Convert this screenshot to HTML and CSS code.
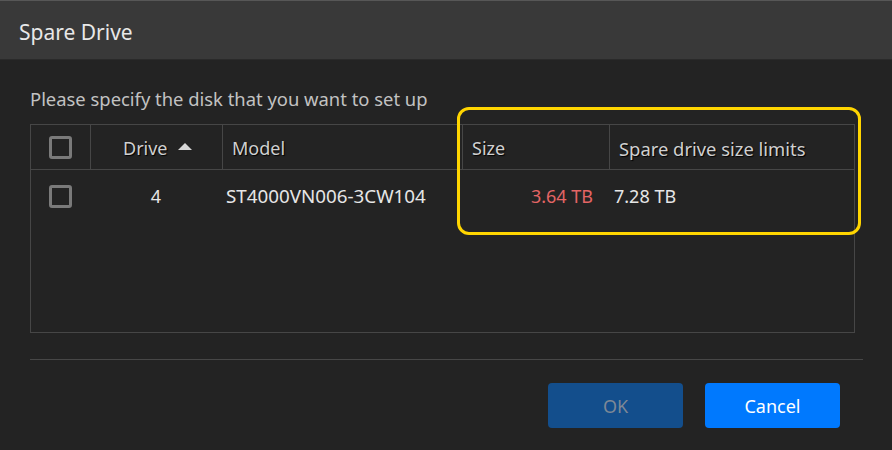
FILE: index.html
```html
<!DOCTYPE html>
<html>
<head>
<meta charset="utf-8">
<link rel="stylesheet" href="styles.css">
</head>
<body>
<div class="dialog">
  <div class="header"><span class="title">Spare Drive</span></div>
  <div class="content">
    <p class="prompt">Please specify the disk that you want to set up</p>
    <div class="table">
      <div class="row head">
        <div class="cell c-check"><span class="checkbox"></span></div>
        <div class="cell c-drive">Drive <span class="sort"></span></div>
        <div class="cell c-model">Model</div>
        <div class="cell c-size">Size</div>
        <div class="cell c-limit">Spare drive size limits</div>
      </div>
      <div class="row data">
        <div class="cell c-check"><span class="checkbox"></span></div>
        <div class="cell c-drive">4</div>
        <div class="cell c-model">ST4000VN006-3CW104</div>
        <div class="cell c-size"><span class="warn">3.64 TB</span></div>
        <div class="cell c-limit">7.28 TB</div>
      </div>
    </div>
    <div class="separator"></div>
    <div class="actions">
      <button class="btn btn-ok" disabled>OK</button>
      <button class="btn btn-cancel">Cancel</button>
    </div>
  </div>
  <div class="highlight"></div>
</div>
</body>
</html>
```
FILE: styles.css
```css
html, body {
  margin: 0;
  padding: 0;
  background: #232323;
}
body {
  font-family: "Noto Sans", "Open Sans", sans-serif;
}
.dialog {
  position: relative;
  width: 892px;
  height: 450px;
  background: #232323;
  overflow: hidden;
}
.header {
  height: 58px;
  background: #393939;
  border-top: 1px solid #575757;
  border-bottom: 1px solid #2a2a2a;
  display: flex;
  align-items: center;
  padding-left: 19px;
  box-sizing: content-box;
}
.title {
  color: #e8e8e8;
  font-size: 21px;
  line-height: 1;
  margin-top: 5px;
}
.content {
  padding: 0 30px;
}
.prompt {
  margin: 0;
  padding-top: 27px;
  height: 37px;
  color: #c2c2c2;
  font-size: 18.4px;
  line-height: 24px;
}
.table {
  width: 825px;
  height: 209px;
  box-sizing: border-box;
  border: 1px solid #464646;
}
.row {
  display: grid;
  grid-template-columns: 59px 132px 240px 147px 245px;
}
.row.head {
  height: 45px;
  padding-top: 2px;
  border-bottom: 1px solid #464646;
  box-sizing: border-box;
  color: #d0d0d0;
  text-shadow: 1px 1px 1px #000;
}
.row.data {
  height: 50px;
  padding-top: 2px;
  box-sizing: border-box;
  color: #e6e6e6;
}
.cell {
  display: flex;
  align-items: center;
  font-size: 18px;
  padding-left: 10px;
  box-sizing: border-box;
  white-space: nowrap;
}
.head .cell + .cell {
  border-left: 1px solid #464646;
  margin-top: -2px;
}
.head .c-check, .data .c-check {
  margin-top: -2px;
}
.c-check {
  padding-left: 18px;
}
.head .c-drive {
  padding-left: 32px;
}
.head .c-drive, .head .c-model, .head .c-size, .head .c-limit {
  padding-top: 2px;
}
.head .c-model, .head .c-size, .head .c-limit {
  padding-left: 9px;
}
.head .c-limit {
  font-size: 18.4px;
}
.data .c-drive {
  justify-content: center;
  padding-left: 0;
}
.data .c-model {
  padding-left: 4px;
  font-size: 18.8px;
}
.data .c-size {
  justify-content: flex-end;
  padding-right: 16px;
}
.data .c-limit {
  padding-left: 5px;
}
.warn {
  color: #e46565;
}
.checkbox {
  width: 23px;
  height: 23px;
  box-sizing: border-box;
  border: 3px solid #7a7a7a;
  border-radius: 3px;
  display: inline-block;
}
.data .checkbox {
  margin-top: 2px;
}
.sort {
  display: inline-block;
  width: 0;
  height: 0;
  border-left: 7px solid transparent;
  border-right: 7px solid transparent;
  border-bottom: 7px solid #d8d8d8;
  margin-left: 10px;
  margin-top: -4px;
}
.separator {
  margin-top: 26px;
  width: 833px;
  height: 1px;
  background: #474747;
}
.actions {
  display: flex;
  justify-content: flex-end;
  gap: 22px;
  padding-top: 23px;
  padding-right: 22px;
}
.btn {
  width: 135px;
  height: 45px;
  padding-top: 2px;
  border: none;
  border-radius: 4px;
  font-family: "Noto Sans", "Open Sans", sans-serif;
  font-size: 18px;
}
.btn-ok {
  background: #134e8c;
  color: #7e8896;
}
.btn-cancel {
  background: #0079fe;
  color: #ffffff;
}
.highlight {
  position: absolute;
  left: 457px;
  top: 107px;
  width: 404px;
  height: 128px;
  box-sizing: border-box;
  border: 3px solid #ffd500;
  border-radius: 12px;
}
```
